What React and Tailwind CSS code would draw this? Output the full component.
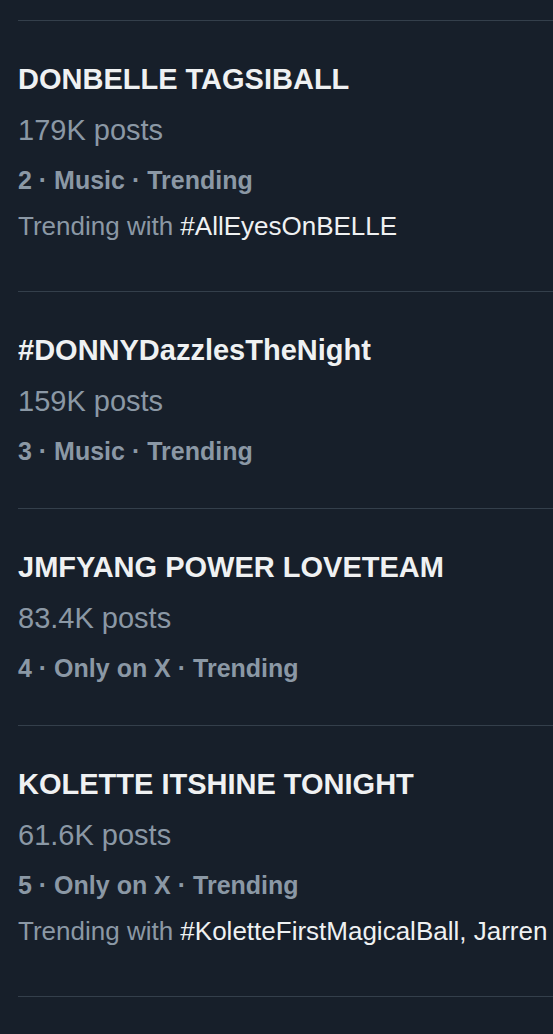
const trends = [
  {
    title: "DONBELLE TAGSIBALL",
    posts: "179K posts",
    meta: "2 · Music · Trending",
    with: "#AllEyesOnBELLE",
  },
  {
    title: "#DONNYDazzlesTheNight",
    posts: "159K posts",
    meta: "3 · Music · Trending",
  },
  {
    title: "JMFYANG POWER LOVETEAM",
    posts: "83.4K posts",
    meta: "4 · Only on X · Trending",
  },
  {
    title: "KOLETTE ITSHINE TONIGHT",
    posts: "61.6K posts",
    meta: "5 · Only on X · Trending",
    with: "#KoletteFirstMagicalBall, Jarren Garcia",
  },
];

export default function App() {
  return (
    <div
      className="h-[1034px] w-full overflow-hidden bg-[#171f2a] pt-[20px]"
      style={{ fontFamily: "'Liberation Sans', Arial, sans-serif" }}
    >
      {trends.map((t) => (
        <div key={t.title} className="ml-[18px] border-t border-[#343f4b]">
          <div className="pt-[33px] pb-[32px]">
            <div className="text-[29px] leading-[51px] font-bold text-[#eff1f2] whitespace-nowrap">
              {t.title}
            </div>
            <div className="text-[29px] leading-[51px] text-[#8b98a5]">{t.posts}</div>
            <div className="text-[25px] leading-[49px] font-bold text-[#8b98a5] whitespace-nowrap">
              {t.meta}
            </div>
            {t.with && (
              <div className="text-[26px] leading-[43px] pb-[11px] text-[#8b98a5] whitespace-nowrap overflow-hidden">
                Trending with <span className="text-[#eff1f2]">{t.with}</span>
              </div>
            )}
          </div>
        </div>
      ))}
      <div className="ml-[18px] border-t border-[#343f4b]" />
    </div>
  );
}
